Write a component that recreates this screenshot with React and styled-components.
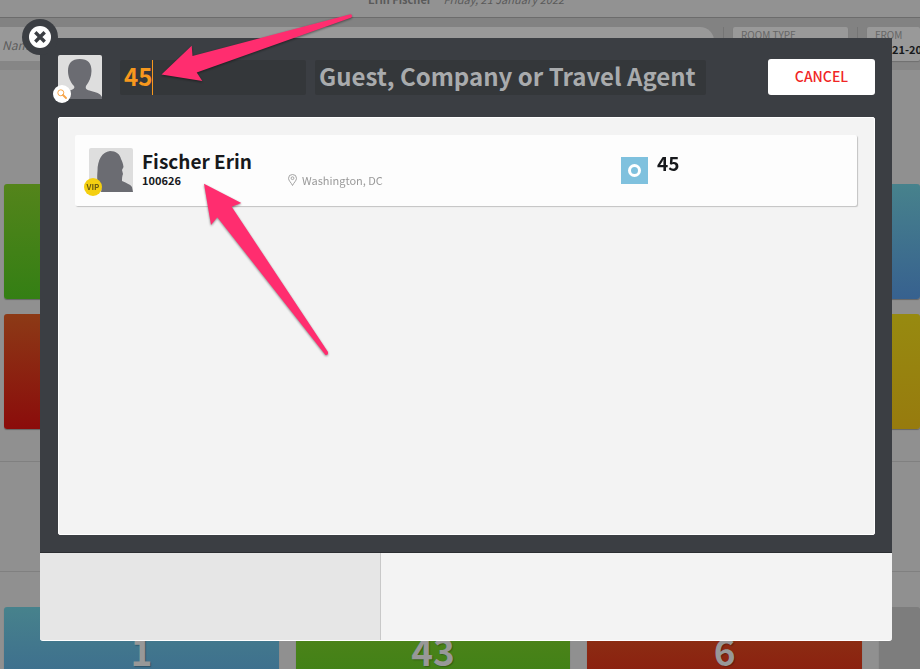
import * as React from 'react';
import styled, {createGlobalStyle} from 'styled-components';

const FONT = '"Noto Sans CJK SC", "Open Sans", sans-serif';
const PANEL = '#3b3e43';
const FIELD = '#34373a';
const ORANGE = '#f7981d';
const PINK = '#ff2d6f';
const PAPER = '#f3f3f3';

const tones = {
  green: 'linear-gradient(#54841b, #347f14)',
  red: 'linear-gradient(#8c3a16, #8b0c0b)',
  blue: 'linear-gradient(#47828c, #37618f)',
  yellow: 'linear-gradient(#978a10, #977b0e)',
  grey: '#7d7d7d',
};

const GlobalStyle = createGlobalStyle`
  *, *::before, *::after {
    box-sizing: border-box;
  }

  body {
    margin: 0;
    overflow: hidden;
    background: #909090;
    color: #17191c;
    font-family: ${FONT};
  }

  button, input {
    font-family: inherit;
  }
`;

/* dimmed page behind the dialog */

const Page = styled.main`
  height: 100vh;
  overflow: hidden;
  background: #909090;
`;

const GuestBar = styled.header`
  display: flex;
  justify-content: center;
  align-items: flex-end;
  gap: 12px;
  height: 17px;
  padding: 0 0 8px 12px;
  background: #929292;
  color: #5a5a5a;
  font-size: 11px;
  line-height: 20px;
  overflow: hidden;
`;

const Toolbar = styled.div`
  display: flex;
  align-items: flex-start;
  height: 53px;
  padding-top: 9px;
  background: #828282;
  border-top: 1px solid #6c6c6c;
  border-bottom: 9px solid #868686;
`;

const NameInput = styled.input`
  flex: 1;
  min-width: 0;
  height: 34px;
  padding: 0 2px;
  border: 0;
  border-radius: 0 14px 14px 0;
  background: #999;
  font-size: 12px;
  font-style: italic;
  &::placeholder {
    color: #5c5c5c;
    opacity: 1;
  }
`;

const Divider = styled.span`
  width: 1px;
  height: 34px;
  margin: 0 9px;
  background: #757575;
`;

const Filter = styled.div`
  width: ${({$width}) => $width};
  height: 34px;
  padding: 1px 8px;
  border-radius: 2px;
  background: #999;
  box-shadow: 0 1px 1px #6f6f6f;
  white-space: nowrap;
  overflow: hidden;
`;

const FilterLabel = styled.div`
  color: #666;
  font-size: 10px;
  line-height: 14px;
`;

const FilterValue = styled.div`
  font-size: 11px;
  font-weight: bold;
  line-height: 14px;
`;

const Section = styled.section`
  display: grid;
  grid-template-columns: repeat(3, 1fr) 41px;
  grid-auto-rows: 115px;
  gap: 15px 17px;
  height: ${({$height}) => $height}px;
  padding: ${({$top}) => $top}px 0 0 4px;
  border-bottom: 1px solid #808080;
`;

const Tile = styled.div`
  grid-column: ${({$last}) => ($last ? 4 : 'auto')};
  padding-top: 19px;
  border-radius: 3px;
  background: ${({$tone}) => tones[$tone]};
  box-shadow: 0 1px 1px rgba(0, 0, 0, 0.3);
  color: #989898;
  font-size: 37px;
  font-weight: bold;
  line-height: 48px;
  text-align: center;
  text-shadow: 1px 1px 1px rgba(0, 0, 0, 0.25);
`;

/* dialog */

const Overlay = styled.div`
  position: fixed;
  inset: 0;
  display: flex;
  flex-direction: column;
  padding: 38px 28px 28px 40px;
`;

const SearchPanel = styled.form`
  display: flex;
  flex-direction: column;
  flex: 1;
  min-height: 0;
  padding: 17px 17px 17px 18px;
  background: ${PANEL};
  border-bottom: 1px solid #2c2e32;
`;

const SearchRow = styled.div`
  display: flex;
  align-items: flex-start;
  height: 62px;
`;

const Portrait = styled.span`
  position: relative;
  flex: none;
  width: 44px;
  height: 44px;
  svg {
    display: block;
  }
`;

const Badge = styled.span`
  position: absolute;
  left: -5px;
  bottom: -4px;
  display: flex;
  align-items: center;
  justify-content: center;
  width: 18px;
  height: 18px;
  border-radius: 50%;
  background: ${({$vip}) => ($vip ? '#f4cf10' : '#fff')};
  color: #6b5b10;
  font-size: 8px;
  font-weight: bold;
  line-height: 8px;
`;

const Field = styled.label`
  position: relative;
  flex: ${({$grow}) => ($grow ? '1' : 'none')};
  width: ${({$grow}) => ($grow ? 'auto' : '186px')};
  min-width: 0;
  margin: 5px 0 0 ${({$grow}) => ($grow ? 9 : 18)}px;
`;

const SearchInput = styled.input`
  display: block;
  width: 100%;
  height: 35px;
  padding: 0 4px 5px;
  border: 0;
  border-radius: 2px;
  outline: none;
  background: ${FIELD};
  color: ${ORANGE};
  caret-color: transparent;
  font-size: 24px;
  font-weight: bold;
  line-height: 30px;
  &::placeholder {
    color: #a9abad;
    opacity: 1;
  }
`;

const Caret = styled.span`
  position: absolute;
  top: 0;
  left: 32px;
  width: 1px;
  height: 35px;
  background: ${ORANGE};
`;

const CancelButton = styled.button`
  flex: none;
  width: 107px;
  height: 36px;
  margin: 4px 0 0 62px;
  padding: 0 0 2px;
  border: 0;
  border-radius: 3px;
  background: #fff;
  color: #f02626;
  font-size: 14px;
  font-weight: 500;
  line-height: 20px;
  cursor: pointer;
`;

const Results = styled.div`
  flex: 1;
  min-height: 0;
  padding: 17px 17px 17px 16px;
  border: 1px solid #fff;
  border-radius: 2px;
  background: ${PAPER};
`;

const ResultCard = styled.article`
  display: grid;
  grid-template-columns: 44px 137px 1fr 236px;
  column-gap: 9px;
  height: 71px;
  padding: 13px 0 0 14px;
  border-radius: 2px;
  background: #fdfdfd;
  box-shadow: 1px 1px 1px #c2c2c2;
`;

const Name = styled.h2`
  margin: 0;
  font-size: 19px;
  line-height: 26px;
  white-space: nowrap;
`;

const Meta = styled.p`
  display: flex;
  align-items: center;
  gap: 5px;
  margin: 0;
  padding-top: ${({$low}) => ($low ? 26 : 0)}px;
  align-self: start;
  color: ${({$muted}) => ($muted ? '#9a9a9a' : 'inherit')};
  font-size: 11px;
  font-weight: ${({$muted}) => ($muted ? 'normal' : 'bold')};
  line-height: 12px;
`;

const Room = styled.div`
  display: flex;
  align-items: flex-start;
  gap: 9px;
  padding-top: 2px;
  font-size: 19px;
  font-weight: bold;
  line-height: 26px;
`;

const RoomStatus = styled.span`
  display: flex;
  align-items: center;
  justify-content: center;
  width: 27px;
  height: 27px;
  margin-top: 7px;
  background: #7fc1de;
  &::after {
    content: '';
    width: 13px;
    height: 13px;
    border: 3px solid #fff;
    border-radius: 50%;
  }
`;

const DialogBody = styled.div`
  display: grid;
  grid-template-columns: 2fr 3fr;
  height: 88px;
  border-radius: 0 0 3px 3px;
  border-bottom: 1px solid #fff;
  background: ${PAPER};
  overflow: hidden;
`;

const DialogAside = styled.div`
  border-right: 1px solid #c8c8c8;
  background: #e6e6e6;
`;

const CloseButton = styled.button`
  position: absolute;
  top: 19px;
  left: 22px;
  width: 36px;
  height: 36px;
  padding: 0;
  border: 0;
  border-radius: 50%;
  background: ${PANEL};
  cursor: pointer;
  svg {
    display: block;
  }
`;

const Arrows = styled.svg`
  position: absolute;
  top: 0;
  left: 0;
  pointer-events: none;
  filter: drop-shadow(0 1px 1px rgba(0, 0, 0, 0.45));
`;

function Silhouette({female}) {
  const shape = female
    ? 'M12 44C13 41 12 39 10 38C8 35 8 29 8.500 23C8.500 12 13 4 21 3C27 3 31 6 32 11C33 13 34 15 34.500 19L33 22L34 26C33 28 33 31 33 33C37 35 41 36 43 39L44 44Z'
    : 'M2 44C2 38 8 37 12 35.500C16 34 17 33 16 31C12 27 10 21 10 16C10 8 14 4 21.700 4C30 4 33.500 8 33.500 16C33.500 22 31 27 28 31C27 34 29 35 33 36C38 37.500 42 38 44 42V44Z';
  return (
    <svg width="44" height="44" viewBox="0 0 44 44" aria-hidden="true">
      <rect width="44" height="44" rx="2" fill="#dedede" />
      <path d={shape} fill="#6b6c72" />
    </svg>
  );
}

function SearchIcon() {
  return (
    <svg width="10" height="10" viewBox="0 0 10 10" fill="none" stroke="#f7a54a" aria-hidden="true">
      <circle cx="3.800" cy="3.800" r="3" />
      <path d="M6 6L9 9" strokeWidth="1.800" strokeLinecap="round" />
    </svg>
  );
}

function PinIcon() {
  return (
    <svg width="9" height="12" viewBox="0 0 9 12" fill="none" stroke="#9a9a9a" strokeWidth="0.900" aria-hidden="true">
      <path d="M4.500 11.500C3.500 9 0.500 6.700 0.500 4.300A4 3.800 0 0 1 8.500 4.300C8.500 6.700 5.500 9 4.500 11.500Z" />
      <circle cx="4.500" cy="4.200" r="1.400" />
    </svg>
  );
}

function App() {
  const [room, setRoom] = React.useState('45');
  const [guest, setGuest] = React.useState('');

  return (
    <>
      <GlobalStyle />
      <Page>
        <GuestBar>
          <strong>Erin Fischer</strong>
          <em>Friday, 21 January 2022</em>
        </GuestBar>
        <Toolbar>
          <NameInput placeholder="Name" aria-label="Name" />
          <Divider />
          <Filter $width="115px">
            <FilterLabel>ROOM TYPE</FilterLabel>
          </Filter>
          <Divider />
          <Filter $width="53px">
            <FilterLabel>FROM</FilterLabel>
            <FilterValue>01-21-2022</FilterValue>
          </Filter>
        </Toolbar>
        <Section $top={114} $height={392}>
          <Tile $tone="green" />
          <Tile $tone="blue" $last />
          <Tile $tone="red" />
          <Tile $tone="yellow" $last />
        </Section>
        <Section $top={0} $height={110} />
        <Section $top={35} $height={200}>
          <Tile $tone="blue">1</Tile>
          <Tile $tone="green">43</Tile>
          <Tile $tone="red">6</Tile>
          <Tile $tone="grey" />
        </Section>
      </Page>

      <Overlay role="dialog" aria-label="Guest search">
        <SearchPanel onSubmit={(e) => e.preventDefault()}>
          <SearchRow>
            <Portrait>
              <Silhouette />
              <Badge><SearchIcon /></Badge>
            </Portrait>
            <Field>
              <SearchInput
                aria-label="Room"
                value={room}
                onChange={(e) => setRoom(e.target.value)}
              />
              <Caret />
            </Field>
            <Field $grow>
              <SearchInput
                aria-label="Guest, Company or Travel Agent"
                placeholder="Guest, Company or Travel Agent"
                value={guest}
                onChange={(e) => setGuest(e.target.value)}
              />
            </Field>
            <CancelButton type="button">CANCEL</CancelButton>
          </SearchRow>
          <Results>
            <ResultCard>
              <Portrait>
                <Silhouette female />
                <Badge $vip>VIP</Badge>
              </Portrait>
              <div>
                <Name>Fischer Erin</Name>
                <Meta>100626</Meta>
              </div>
              <Meta $muted $low>
                <PinIcon />
                Washington, DC
              </Meta>
              <Room>
                <RoomStatus />
                45
              </Room>
            </ResultCard>
          </Results>
        </SearchPanel>
        <DialogBody>
          <DialogAside />
        </DialogBody>
        <CloseButton type="button" aria-label="Close">
          <svg width="36" height="36" viewBox="0 0 36 36" aria-hidden="true">
            <circle cx="18" cy="18" r="11" fill="#fff" />
            <path d="M14.500 14.500L21.500 21.500M21.500 14.500L14.500 21.500" stroke={PANEL} strokeWidth="3.400" strokeLinecap="square" />
          </svg>
        </CloseButton>
        <Arrows width="360" height="360" viewBox="0 0 360 360" fill={PINK} aria-hidden="true">
          <path d="M161.500 74.500L191.700 45.700L192.500 56L350.500 14.300Q353 15 351.500 17.500L196.700 72.500L202.300 81Z" />
          <path d="M204 183.700L241.300 203L231.700 206.700L328 352Q328.500 355.500 325.500 355L217.300 217.300L211 225Z" />
        </Arrows>
      </Overlay>
    </>
  );
}

export default App;
